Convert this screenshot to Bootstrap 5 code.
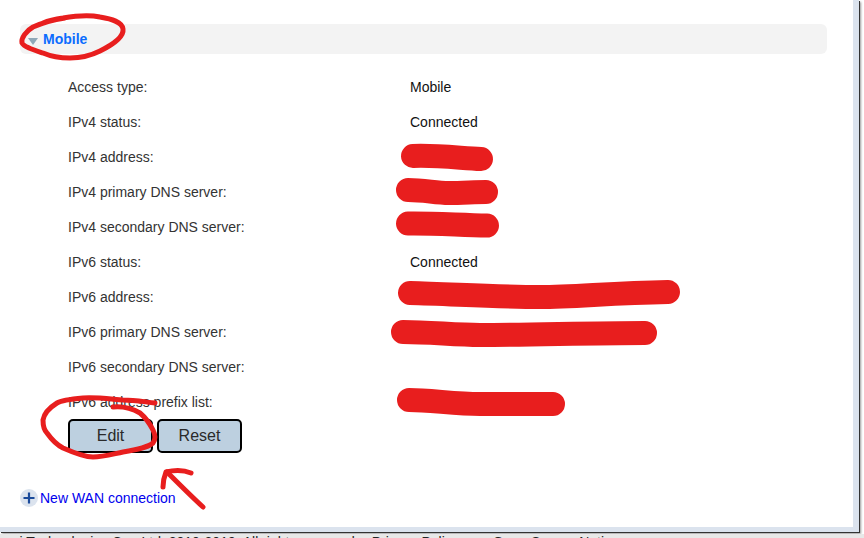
<!DOCTYPE html>
<html lang="en">
<head>
<meta charset="utf-8">
<title>Mobile WAN</title>
<link rel="stylesheet" href="https://cdn.jsdelivr.net/npm/bootstrap@5.3.0/dist/css/bootstrap.min.css">
<style>
html,body{height:538px;overflow:hidden}
body{position:relative;background:#fff;font-family:"Liberation Sans",Arial,sans-serif;font-size:14px;color:#333}
.wan-panel{width:859px;height:532px;background:#fff;border-right:6px solid #dbe3ee;border-bottom:5px solid #dbe3ee;box-shadow:1px 1px 0 #333,2px 2px 2px #999;padding:24px 26px 0 20px}
.wan-head{height:30px;background:#f3f3f3;border-radius:6px;padding-left:8px;color:#0b6cff;font-weight:700}
.wan-caret{width:0;height:0;margin:5px 1px 0 0;border-left:5.5px solid transparent;border-right:5.5px solid transparent;border-top:7px solid #8fa8b8}
.wan-rows{margin:16px 0 0 48px}
.wan-row{height:35px}
.wan-label{width:342px}
.wan-value{color:#111}
.wan-actions{margin-top:-1px}
.wan-btn{width:85px;height:34px;padding:0;background:#bdd0e0;border:2px solid #000;border-radius:5px;color:#2a2a2a;font-size:16px;line-height:1}
.wan-btn:hover{background:#bdd0e0;border-color:#000;color:#2a2a2a}
.wan-add{margin-top:36px;gap:2px}
.wan-plus{width:18px;height:18px}
.wan-link{color:#0000ee;text-decoration:none;line-height:18px}
.wan-foot{margin-top:2px;height:4px;overflow:hidden;background:#e8e8e8}
.wan-foot-text{margin:1px 0 0 -24px;height:14px;line-height:14px;white-space:nowrap;color:#222}
.wan-marks{position:absolute;left:0;top:0;width:864px;height:538px;pointer-events:none}
.wan-gap1{margin-left:13px}
.wan-gap2{margin-left:34px}
</style>
</head>
<body>
<div class="wan-panel">
  <div class="wan-head d-flex align-items-center gap-1"><span class="wan-caret"></span><span>Mobile</span></div>
  <div class="wan-rows d-flex flex-column">
    <div class="wan-row d-flex align-items-center"><div class="wan-label">Access type:</div><div class="wan-value">Mobile</div></div>
    <div class="wan-row d-flex align-items-center"><div class="wan-label">IPv4 status:</div><div class="wan-value">Connected</div></div>
    <div class="wan-row d-flex align-items-center"><div class="wan-label">IPv4 address:</div></div>
    <div class="wan-row d-flex align-items-center"><div class="wan-label">IPv4 primary DNS server:</div></div>
    <div class="wan-row d-flex align-items-center"><div class="wan-label">IPv4 secondary DNS server:</div></div>
    <div class="wan-row d-flex align-items-center"><div class="wan-label">IPv6 status:</div><div class="wan-value">Connected</div></div>
    <div class="wan-row d-flex align-items-center"><div class="wan-label">IPv6 address:</div></div>
    <div class="wan-row d-flex align-items-center"><div class="wan-label">IPv6 primary DNS server:</div></div>
    <div class="wan-row d-flex align-items-center"><div class="wan-label">IPv6 secondary DNS server:</div></div>
    <div class="wan-row d-flex align-items-center"><div class="wan-label">IPv6 address prefix list:</div></div>
    <div class="wan-actions d-flex gap-1"><button type="button" class="btn wan-btn">Edit</button><button type="button" class="btn wan-btn">Reset</button></div>
  </div>
  <div class="wan-add d-flex align-items-center">
    <svg class="wan-plus" viewBox="0 0 18 18" aria-hidden="true"><circle cx="9" cy="9" r="9" fill="#dbe3ee"/><path d="M9 3.5v11M3.5 9h11" stroke="#1a4a9a" stroke-width="2.2" fill="none"/></svg>
    <a href="#" class="wan-link">New WAN connection</a>
  </div>
</div>
<div class="wan-foot"><div class="wan-foot-text">Huawei Technologies Co., Ltd. 2010-2019. All rights reserved.<span class="wan-gap1">Privacy Policy</span><span class="wan-gap2">Open Source Notice</span></div></div>
<svg class="wan-marks" viewBox="0 0 864 538" aria-hidden="true" fill="none" stroke-linecap="round" stroke-linejoin="round">
  <g stroke="#e81e1e" stroke-width="5">
    <path d="M43 23C50 20 56 19 63 18C75 16 90 15 100 17C112 19 122 22 123 29C124 36 116 43 100 51C90 56 80 58 70 58C60 58 50 56 43 53C34 50 24 47 22 43C21 38 26 31 33 27C42 23 52 20 65 18"/>
    <path d="M155 403C145 402 135 400 123 400C110 399 95 397 83 398C72 399 62 400 57 403C49 408 44 414 43 420C43 426 44 430 47 433C52 440 57 445 63 448C72 452 83 457 93 457C103 457 113 454 123 452C135 450 147 448 153 443C156 439 155 434 153 430C150 424 146 418 140 413C133 409 123 406 113 407"/>
    <path d="M163 487C163 481 164 477 166 472C174 470 184 470 191 473"/>
    <path d="M167 472C178 483 192 497 203 507"/>
  </g>
  <g stroke="#e81e1e" stroke-width="24">
    <path d="M413 156C435 155 460 158 481 159"/>
    <path d="M408 190C425 190 435 193 449 193C462 193 475 192 486 192"/>
    <path d="M408 223.5C430 223 460 225 487 225.5"/>
    <path d="M410 293C450 294 500 297 540 297C575 297 610 293 668 292"/>
    <path d="M403 332C430 332 455 335 480 335C530 335 590 333 645 333"/>
    <path d="M409 400C430 400 455 404 480 404C505 404 530 404 553 404"/>
  </g>
</svg>
<script src="https://cdn.jsdelivr.net/npm/bootstrap@5.3.0/dist/js/bootstrap.bundle.min.js"></script>
</body>
</html>
